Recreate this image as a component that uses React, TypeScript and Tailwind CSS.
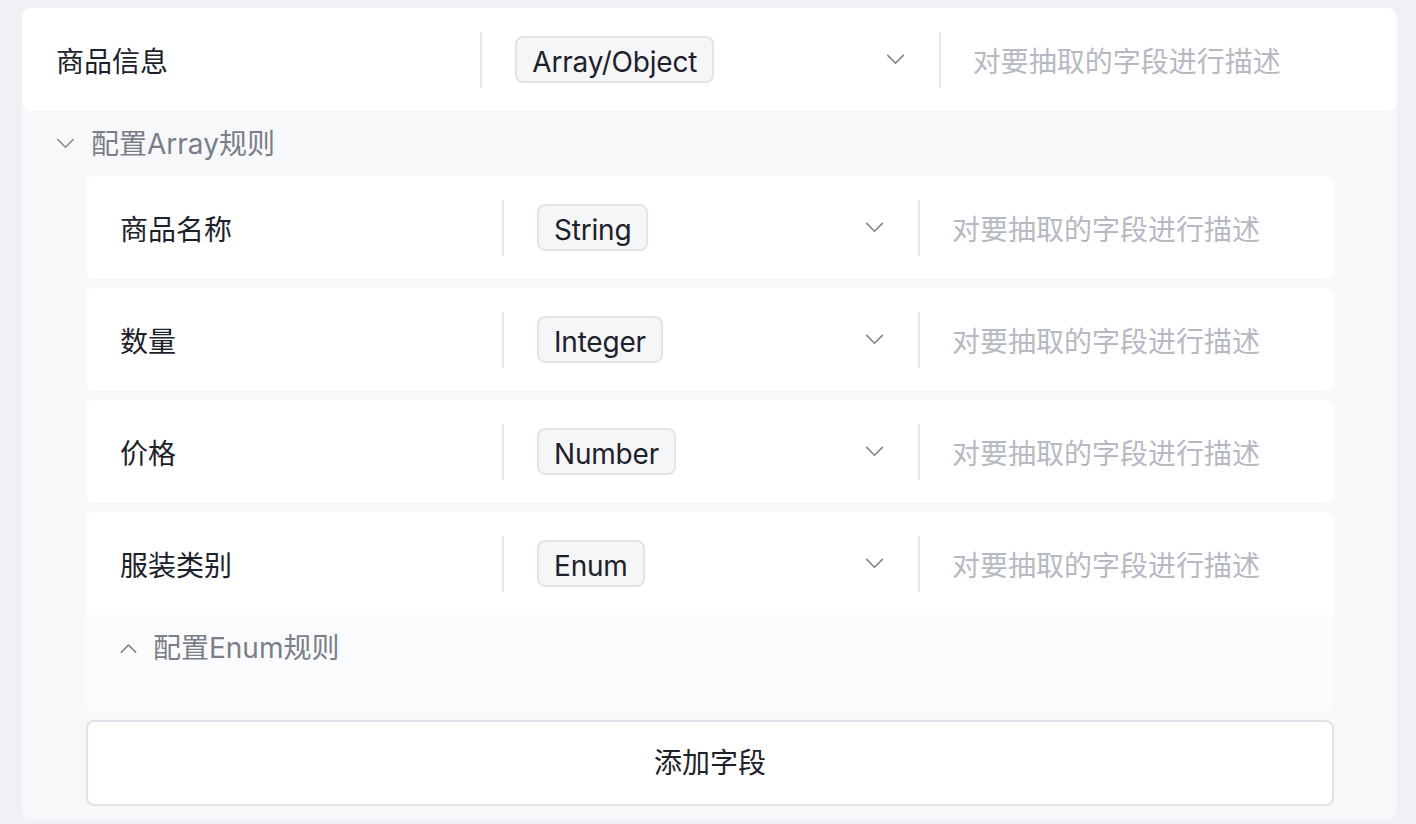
import React from "react";

const FONT = { fontFamily: '"Inter", "Noto Sans CJK SC", sans-serif' };

function ChevronDown({ className = "" }: { className?: string }) {
  return (
    <svg
      viewBox="0 0 20 12"
      className={className}
      fill="none"
      stroke="currentColor"
      strokeWidth={1.6}
      strokeLinecap="round"
      strokeLinejoin="round"
    >
      <path d="M1.5 1.5 L10 10 L18.5 1.5" />
    </svg>
  );
}

function ChevronUp({ className = "" }: { className?: string }) {
  return (
    <svg
      viewBox="0 0 20 12"
      className={className}
      fill="none"
      stroke="currentColor"
      strokeWidth={1.6}
      strokeLinecap="round"
      strokeLinejoin="round"
    >
      <path d="M1.5 10.5 L10 2 L18.5 10.5" />
    </svg>
  );
}

function FieldRow({ label, type }: { label: string; type: string }) {
  return (
    <div className="grid h-[103px] grid-cols-3 items-center">
      <div className="flex h-14 items-center pl-[34px] pt-[4px] text-[28px] text-[#1d2129]">
        {label}
      </div>
      <div className="flex h-14 items-center justify-between border-l-2 border-[#e6e7eb] pl-[33px] pr-[34px]">
        <span className="flex h-[47px] items-center rounded-[8px] border-2 border-[#e3e4e9] bg-[#f5f6f8] px-[15px] pt-[4px] text-[28px] tracking-[-0.2px] text-[#1d2129]">
          {type}
        </span>
        <ChevronDown className="h-[11px] w-[19px] text-[#7d8088]" />
      </div>
      <div className="flex h-14 items-center border-l-2 border-[#e6e7eb] pl-[32px] pt-[4px] text-[28px] text-[#b6b9c1]">
        对要抽取的字段进行描述
      </div>
    </div>
  );
}

export default function App() {
  const fields = [
    { label: "商品名称", type: "String" },
    { label: "数量", type: "Integer" },
    { label: "价格", type: "Number" },
  ];

  return (
    <div className="min-h-screen bg-[#f0f1f5] pl-[22px] pr-[19px] pt-2" style={FONT}>
      <div className="rounded-[10px] bg-[#f7f8fa] pb-[14px]">
        <div className="rounded-[10px] bg-white">
          <FieldRow label="商品信息" type="Array/Object" />
        </div>

        <div className="flex h-[65px] items-center gap-[16px] pl-[34px] text-[28px] text-[#7b7e87]">
          <ChevronDown className="h-[11px] w-[19px] text-[#8a8d94]" />
          <span>配置Array规则</span>
        </div>

        <div className="ml-[64px] mr-[63px] flex flex-col gap-[9px]">
          {fields.map((f) => (
            <div key={f.label} className="rounded-[8px] bg-white">
              <FieldRow label={f.label} type={f.type} />
            </div>
          ))}

          <div className="overflow-hidden rounded-[8px] bg-white">
            <FieldRow label="服装类别" type="Enum" />
            <div className="h-[96px] bg-[#fafbfc]">
              <div className="flex h-[66px] items-center gap-[16px] pl-[34px] text-[28px] text-[#7b7e87]">
                <ChevronUp className="h-[11px] w-[17px] text-[#6f727a]" />
                <span>配置Enum规则</span>
              </div>
            </div>
          </div>

          <button
            type="button"
            className="flex h-[86px] items-center justify-center rounded-[8px] border-2 border-[#e1e2e7] bg-white text-[28px] text-[#1d2129]"
          >
            添加字段
          </button>
        </div>
      </div>
    </div>
  );
}
